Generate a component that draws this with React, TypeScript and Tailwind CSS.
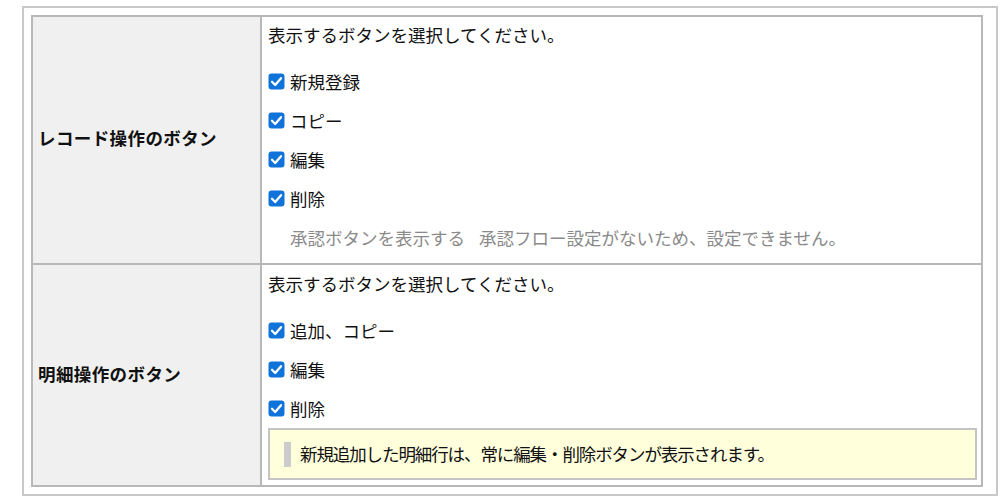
import React from "react";

function Check() {
  return (
    <svg width="17" height="17" viewBox="0 0 17 17" className="shrink-0">
      <rect x="0.5" y="0.5" width="16" height="16" rx="3" fill="#0f73da" />
      <path d="M4 8.8 L7.2 12 L13 5.2" fill="none" stroke="#fff" strokeWidth="2.3" strokeLinecap="round" strokeLinejoin="round" />
    </svg>
  );
}

function CbRow({ label }: { label: string }) {
  return (
    <div className="flex h-[39px] items-center">
      <Check />
      <span className="ml-[5px]">{label}</span>
    </div>
  );
}

export default function App() {
  return (
    <div
      className="bg-white text-[17.5px] text-[#111] leading-none"
      style={{ fontFamily: '"Noto Sans CJK JP", "Noto Sans", sans-serif' }}
    >
      <div className="ml-[22px] pt-[6px]">
        <div className="w-[976px] border-2 border-[#c8c8c8] pt-[7px] pb-[7px] pl-[7px]">
          <div className="w-[952px] border-2 border-[#b8b8b8] grid grid-cols-[229px_1fr]">
            {/* Row 1 */}
            <div className="bg-[#f0f0f0] border-r-2 border-[#b8b8b8] flex items-center pl-[5px] pb-[4px] font-bold tracking-[0.4px]">
              レコード操作のボタン
            </div>
            <div className="pl-[6px] pr-[4px] pb-[6px]">
              <div className="flex h-[36px] items-center">表示するボタンを選択してください。</div>
              <div className="mt-[9px]">
                <CbRow label="新規登録" />
                <CbRow label="コピー" />
                <CbRow label="編集" />
                <CbRow label="削除" />
                <div className="flex h-[39px] items-center pl-[22px] text-[#8a8a8a]">
                  <span>承認ボタンを表示する</span>
                  <span className="ml-[14px]">承認フロー設定がないため、設定できません。</span>
                </div>
              </div>
            </div>
            {/* Row 2 */}
            <div className="bg-[#f0f0f0] border-r-2 border-t-2 border-[#b8b8b8] flex items-center pl-[5px] pb-[2px] font-bold tracking-[0.4px]">
              明細操作のボタン
            </div>
            <div className="border-t-2 border-[#b8b8b8] pl-[6px] pr-[4px] pb-[5px]">
              <div className="flex h-[37px] items-center">表示するボタンを選択してください。</div>
              <div className="mt-[9px]">
                <CbRow label="追加、コピー" />
                <CbRow label="編集" />
                <CbRow label="削除" />
              </div>
              <div className="h-[52px] border-2 border-[#c4c4c4] bg-[#ffffdc] flex items-center pl-[14px]">
                <div className="w-[7px] h-[25px] bg-[#cccccc]" />
                <span className="ml-[9px] tracking-[-1.1px]">新規追加した明細行は、常に編集・削除ボタンが表示されます。</span>
              </div>
            </div>
          </div>
        </div>
      </div>
    </div>
  );
}
